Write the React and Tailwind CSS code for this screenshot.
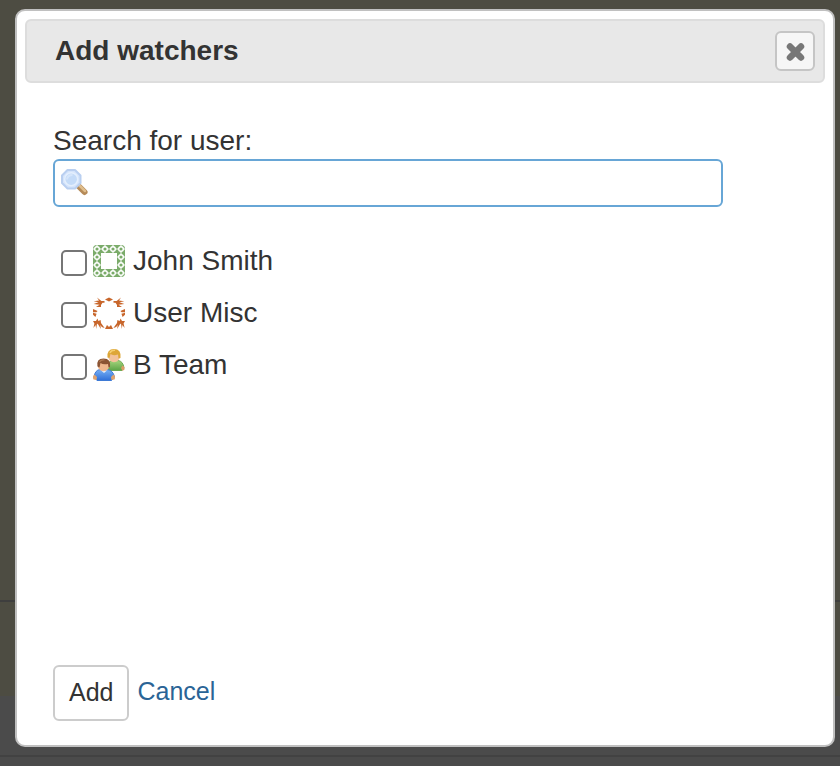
import { useState } from "react";

function GreenAvatar() {
  const cells = [];
  for (let row = 0; row < 4; row++) {
    for (let col = 0; col < 4; col++) {
      const edge = row === 0 || row === 3 || col === 0 || col === 3;
      if (edge) cells.push([col * 8 + 4, row * 8 + 4]);
    }
  }
  return (
    <svg viewBox="0 0 32 32" className="size-8 rounded-sm" aria-hidden="true">
      <rect width="32" height="32" fill="#7aab69" />
      {cells.map(([x, y]) => (
        <g key={`${x}-${y}`} stroke="#fff">
          <path d={`M${x - 4} ${y}h8M${x} ${y - 4}v8`} strokeWidth="1.1" />
          <circle cx={x} cy={y} r="2.3" fill="#7aab69" strokeWidth="1.4" />
        </g>
      ))}
      <rect x="8" y="8" width="16" height="16" fill="#fff" />
    </svg>
  );
}

function OrangeAvatar() {
  const side =
    "M4 0.4L8.400 4H11.500V5.800H9.500L8 8V10L3 10L6.500 7.800L0.600 7L5.500 5.300L0.600 4.200L6 3.600ZM0 12L4.600 14L3.400 15.200H0ZM0 15.700L3.600 16.800L2.400 20L0 17.800ZM0 24H3L4.400 21.600L5.400 24L7.600 23L8 26L11.600 31L8.800 30L7.400 28L7.800 32L5.200 27.500L4 26.500L3.200 32L2.600 28L0.400 31L1.400 26.500Z";
  return (
    <svg viewBox="0 0 32 32" className="size-8" fill="#c8662b" aria-hidden="true">
      <path d={side} />
      <path d={side} transform="translate(32 0) scale(-1 1)" />
      <path d="M12 2.4L16 0.4L20 2.4L16 4.6ZM12 32L14 28L16 30L18 28L20 32Z" />
    </svg>
  );
}

function GroupAvatar() {
  return (
    <svg viewBox="0 0 32 32" className="size-8" aria-hidden="true">
      <defs>
        <linearGradient id="green-shirt" x2="0" y2="1">
          <stop stopColor="#a5d47c" />
          <stop offset="1" stopColor="#5ca447" />
        </linearGradient>
        <linearGradient id="blue-shirt" x2="0" y2="1">
          <stop stopColor="#78b0f5" />
          <stop offset="1" stopColor="#2f6fd8" />
        </linearGradient>
      </defs>
      <path d="M14 18Q15 12 20 11.500H25Q30 12 31 19L29 21.500H16Z" fill="url(#green-shirt)" stroke="#6faa55" />
      <path d="M29.500 16.500q2.500 1 2 4l-2 1.500-1.500-3Z" fill="#dc9d68" />
      <circle cx="21" cy="7.500" r="5.800" fill="#f2c29a" />
      <path d="M14.500 8.500Q13.500 0 21 0Q28.500 0 27.500 9L25.500 9.500L25 5.500Q20 7 17.500 5L16.500 9Z" fill="#dda637" />
      <path d="M17 4Q18 1 22 1.200" stroke="#f5cf70" strokeWidth="1.500" fill="none" />
      <path d="M1 28Q2 21 7 20.500H14Q20 21 21.500 28L18.500 31.500H4Z" fill="url(#blue-shirt)" stroke="#3e7ad5" />
      <path d="M1.500 25.500q-2.500 2-1 5l3 .5 .5-3Z M20.500 25.500q2.500 2 1 5l-3 .5-.5-3Z" fill="#e0a36f" />
      <path d="M8 21.500L11 24L14 21.500Z" fill="#e5eefb" />
      <circle cx="10.500" cy="16.500" r="5.800" fill="#efb78e" />
      <path d="M4.500 17.500Q3 9.500 10.500 9.500Q18.500 9.500 17 18L15.500 18.500L15 15Q10 16 7.500 14L6.500 18.500Z" fill="#8b5434" />
      <path d="M6.500 13Q8 10.500 11.500 11" stroke="#b17b55" strokeWidth="1.200" fill="none" />
    </svg>
  );
}

function SearchIcon() {
  return (
    <svg viewBox="0 0 28 28" className="size-7 shrink-0" aria-hidden="true">
      <path d="M18 17.500L23.500 23" stroke="#b58a58" strokeWidth="6" strokeLinecap="round" />
      <path d="M18.500 16.500L24 22" stroke="#dfbd8c" strokeWidth="2.500" strokeLinecap="round" />
      <path d="M6.500 1H14L19.500 6.500V14L14 19.500H6.500L1 14V6.500Z" fill="#d5e4fb" stroke="#b9cff0" strokeWidth="2" strokeLinejoin="round" />
      <circle cx="10.200" cy="10.200" r="6.500" fill="#c4dbf8" stroke="#e4effd" strokeWidth="1.500" />
      <path d="M6 10.500Q6.500 6 11.500 6" stroke="#d6e6fb" strokeWidth="2" fill="none" />
    </svg>
  );
}

const watchers = [
  { id: "john", name: "John Smith", Avatar: GreenAvatar },
  { id: "misc", name: "User Misc", Avatar: OrangeAvatar },
  { id: "team", name: "B Team", Avatar: GroupAvatar },
];

export default function App() {
  const [query, setQuery] = useState("");
  const [selected, setSelected] = useState([]);

  const toggle = (id) => {
    setSelected((prev) =>
      prev.includes(id) ? prev.filter((item) => item !== id) : [...prev, id]
    );
  };

  return (
    <div className="relative flex min-h-screen flex-col bg-[#4b4b4b] pt-[9px] pr-[5px] pb-[19px] pl-[15px] font-['Liberation_Sans',Arial,sans-serif] text-[28px] leading-8 text-[#333]">
      {/* dimmed page behind the dialog */}
      <div className="absolute inset-0 flex flex-col" aria-hidden="true">
        <div className="h-[602px] border-b-2 border-[#3e3e3e] bg-[#4d4c42]" />
        <div className="h-[94px] bg-[#4d4c42]" />
        <div className="h-[61px] border-b-2 border-[#424242]" />
      </div>

      <div
        role="dialog"
        aria-labelledby="dialog-title"
        className="relative flex flex-1 flex-col rounded-[10px] border-2 border-[#c0c0c0] bg-white p-2"
      >
        <div className="flex h-16 items-center justify-between rounded-md border-2 border-[#ddd] bg-[#e8e8e8] pr-2 pl-7">
          <h2 id="dialog-title" className="font-bold">
            Add watchers
          </h2>
          <button
            type="button"
            aria-label="Close"
            className="flex size-10 items-center justify-center rounded-md border-2 border-[#c5c5c5] bg-[#f6f6f6]"
          >
            <svg viewBox="0 0 20 20" className="size-5" aria-hidden="true">
              <path d="M5 5.500L16 16.500M16 5.500L5 16.500" stroke="#777" strokeWidth="6.500" strokeLinecap="round" />
            </svg>
          </button>
        </div>

        <form
          className="flex flex-1 flex-col px-7 pt-[42px] pb-4"
          onSubmit={(e) => e.preventDefault()}
        >
          <label htmlFor="user-search">Search for user:</label>
          <div className="mt-0.5 flex h-12 w-[90%] items-center gap-1 rounded-md border-2 border-[#67a6d6] bg-white px-1.5">
            <SearchIcon />
            <input
              id="user-search"
              type="text"
              value={query}
              onChange={(e) => setQuery(e.target.value)}
              className="min-w-0 flex-1 outline-none"
            />
          </div>

          <div className="mt-7 flex flex-col px-2">
            {watchers.map(({ id, name, Avatar }) => (
              <label key={id} className="flex h-13 items-center">
                <input
                  type="checkbox"
                  checked={selected.includes(id)}
                  onChange={() => toggle(id)}
                  className="mt-1 mr-1.5 size-[26px] appearance-none rounded-[5px] border-2 border-[#767676] bg-white checked:bg-[#2a6496]"
                />
                <Avatar />
                <span className="ml-2">{name}</span>
              </label>
            ))}
          </div>

          <div className="mt-auto flex items-center gap-2 text-[25px]">
            <button
              type="submit"
              className="h-14 rounded-md border-2 border-[#ccc] bg-white px-3.5 pb-0.5"
            >
              Add
            </button>
            <a href="#" className="pb-1 text-[#2a6496]">
              Cancel
            </a>
          </div>
        </form>
      </div>
    </div>
  );
}
